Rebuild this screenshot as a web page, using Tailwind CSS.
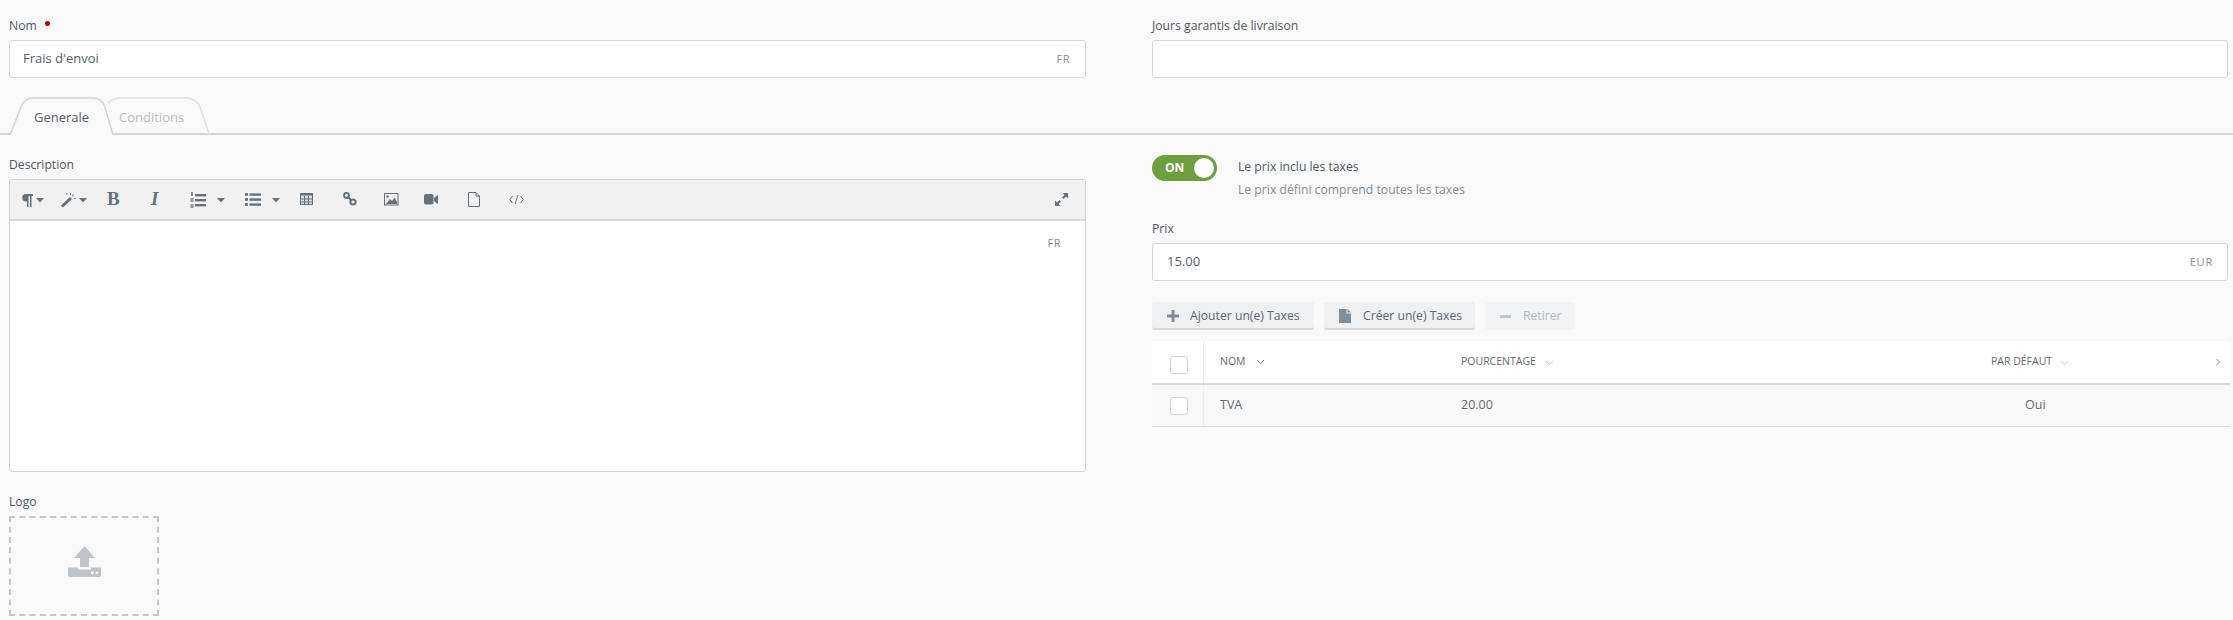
<!DOCTYPE html>
<html lang="fr">
<head>
  <meta charset="UTF-8">
  <title>Frais d'envoi</title>
  <script src="https://cdn.jsdelivr.net/npm/@tailwindcss/browser@4"></script>
</head>
<body class="bg-[#f9f9f9] font-['Open_Sans',sans-serif] text-[12.2px] text-[#55606b] overflow-hidden">
<div class="w-[2233px] h-[620px] overflow-hidden">

  <!-- top fields -->
  <div class="flex pl-[9px] pt-[17px] pr-[5px] gap-[66px]">
    <div class="w-[1077px]">
      <div class="h-[23px] leading-[18px] text-[#4d5862] flex items-start">Nom <span class="w-[5px] h-[5px] rounded-full bg-[#b30000] ml-[8px] mt-[4px]"></span></div>
      <div class="h-[38px] bg-white border border-[#d5d7d8] rounded-[3px] flex items-center justify-between pl-[13px] pr-[15px]">
        <span class="text-[13px]">Frais d'envoi</span><span class="text-[11px] text-[#8a8f93] tracking-[0.5px]">FR</span>
      </div>
    </div>
    <div class="flex-1">
      <div class="h-[23px] leading-[18px] text-[#4d5862]">Jours garantis de livraison</div>
      <div class="h-[38px] bg-white border border-[#d5d7d8] rounded-[3px]"></div>
    </div>
  </div>

  <!-- tabs -->
  <div class="relative h-[38px] mt-[19px] border-b-2 border-[#d2d4d5]">
    <svg class="absolute left-[8px] top-0" width="206" height="38" viewBox="0 0 206 38" fill="none">
      <path d="M100 6 Q105 1 113 1 L178 1 Q188 1 192 10 L201 37" fill="#f9f9f9" stroke="#dfe1e2" stroke-width="1.5"/>
      <path d="M2 38 L13 10 Q16 1 26 1 L84 1 Q94 1 97 10 L105 38" fill="#f9f9f9" stroke="#d2d4d5" stroke-width="1.5"/>
    </svg>
    <span class="absolute left-[34px] top-[10px] text-[13px] leading-[20px] text-[#55606b]">Generale</span>
    <span class="absolute left-[119px] top-[10px] text-[13px] leading-[20px] text-[#bcbfc1]">Conditions</span>
  </div>

  <div class="flex pl-[9px] pr-[3px] gap-[66px]">
    <!-- left column -->
    <div class="w-[1077px]">
      <div class="h-[20px] mt-[21px] mb-[3px] leading-[18px] text-[#4d5862]">Description</div>
      <div class="h-[293px] bg-white border border-[#d0d2d3] rounded-[3px] flex flex-col">
        <div class="h-[41px] bg-[#f1f1f1] border-b-2 border-[#d8d9da] relative text-[#66707a] shrink-0">
          <!-- paragraph -->
          <svg class="absolute left-[12px] top-[14px]" width="11" height="13" viewBox="0 0 11 13" fill="#66707a"><path d="M4 0H11V2H9.5V13H8V2H6.5V13H5V7.5H4A3.75 3.75 0 0 1 4 0Z"/></svg>
          <svg class="absolute left-[26px] top-[18px]" width="8" height="5" fill="#66707a"><path d="M0 0H8L4 4.5Z"/></svg>
          <!-- magic -->
          <svg class="absolute left-[50px] top-[12px]" width="16" height="16" viewBox="0 0 16 16" fill="#66707a"><path d="M1 13.5 10 5l2 2-9 8.5z"/><path d="M10 1h1v2h-1zM13 2l1 1-1.5 1.5-1-1zM14 6h2v1h-2zM6 1l1 0 .5 2-1 0z" opacity=".75"/></svg>
          <svg class="absolute left-[69px] top-[18px]" width="8" height="5" fill="#66707a"><path d="M0 0H8L4 4.5Z"/></svg>
          <!-- bold / italic -->
          <span class="absolute left-[97px] top-[9px] font-['Liberation_Serif',serif] font-bold text-[19px] leading-[20px]">B</span>
          <span class="absolute left-[141px] top-[9px] font-['Liberation_Serif',serif] italic font-bold text-[19px] leading-[20px]">I</span>
          <!-- ol -->
          <svg class="absolute left-[180px] top-[12px]" width="16" height="16" viewBox="0 0 16 16" fill="#66707a"><rect x="5" y="2" width="11" height="2.4"/><rect x="5" y="7" width="11" height="2.4"/><rect x="5" y="12" width="11" height="2.4"/><rect x="1" y="0" width="2" height="4" opacity=".8"/><rect x="0.5" y="6" width="3" height="4" opacity=".7"/><rect x="0.5" y="12" width="3" height="4" opacity=".7"/></svg>
          <svg class="absolute left-[207px] top-[18px]" width="8" height="5" fill="#66707a"><path d="M0 0H8L4 4.5Z"/></svg>
          <!-- ul -->
          <svg class="absolute left-[235px] top-[13px]" width="16" height="13" viewBox="0 0 16 13" fill="#66707a"><rect y="0" width="3" height="3" rx="1"/><rect y="5" width="3" height="3" rx="1"/><rect y="10" width="3" height="3" rx="1"/><rect x="4.5" y=".4" width="11.5" height="2.4"/><rect x="4.5" y="5.4" width="11.5" height="2.4"/><rect x="4.5" y="10.4" width="11.5" height="2.4"/></svg>
          <svg class="absolute left-[262px] top-[18px]" width="8" height="5" fill="#66707a"><path d="M0 0H8L4 4.5Z"/></svg>
          <!-- table -->
          <svg class="absolute left-[290px] top-[13px]" width="13" height="12" viewBox="0 0 13 12" fill="none" stroke="#66707a"><rect x=".5" y=".5" width="12" height="11" fill="#66707a" fill-opacity=".15"/><path d="M0 1.5h13" stroke-width="2"/><path d="M0 6h13M0 9h13M4.5 3v9M8.5 3v9"/></svg>
          <!-- link -->
          <svg class="absolute left-[333px] top-[12px]" width="14" height="14" viewBox="0 0 14 14" fill="none" stroke="#66707a" stroke-width="2"><circle cx="3.5" cy="3.5" r="2.4"/><circle cx="10" cy="10" r="2.6"/><path d="M5.5 5.5l2.5 2.5"/></svg>
          <!-- image -->
          <svg class="absolute left-[374px] top-[13px]" width="15" height="13" viewBox="0 0 15 13" fill="none" stroke="#66707a"><rect x=".5" y=".5" width="13.5" height="11.5"/><circle cx="3.5" cy="3.5" r="1.2" fill="#66707a" stroke="none"/><path d="M2 11 6 6l2 2 2.5-3.5L13 9v2z" fill="#66707a" stroke="none"/></svg>
          <!-- video -->
          <svg class="absolute left-[414px] top-[14px]" width="14" height="11" viewBox="0 0 14 11" fill="#66707a"><rect width="9.5" height="10.5" rx="2"/><path d="M10 4 14 .8v9.4L10 7z"/></svg>
          <!-- file -->
          <svg class="absolute left-[458px] top-[12px]" width="12" height="15" viewBox="0 0 12 15" fill="none" stroke="#66707a"><path d="M.5.5H8L11.5 4v10.5H.5zM8 .5V4h3.5"/></svg>
          <!-- code -->
          <svg class="absolute left-[499px] top-[14px]" width="15" height="11" viewBox="0 0 15 11" fill="none" stroke="#66707a"><path d="M3.5 2 .8 5.5 3.5 9M11.5 2l2.7 3.5L11.5 9M8.8 1 6.2 10"/></svg>
          <!-- fullscreen -->
          <svg class="absolute right-[17px] top-[13px]" width="13" height="13" viewBox="0 0 13 13" fill="#66707a"><path d="M7.5 0H13V5.5L11 3.5 8.5 6 7 4.5 9.5 2zM5.5 13H0V7.5L2 9.5 4.5 7 6 8.5 3.5 11z"/></svg>
        </div>
        <div class="flex justify-end pr-[24px] pt-[14px] text-[11px] leading-[15px] text-[#8a8f93] tracking-[0.5px]">FR</div>
      </div>
      <div class="h-[20px] mt-[20px] mb-[4px] leading-[20px] text-[#4d5862]">Logo</div>
      <div class="w-[150px] h-[100px] border-2 border-dashed border-[#c4c6c7] flex items-center justify-center pb-[10px]">
        <svg width="33" height="31" viewBox="0 0 33 31" fill="#bfc4c9"><path d="M16.5 0 27 12H21V21H12V12H6Z"/><path d="M0 21.5H10V23.5H23V21.5H33V29Q33 31 31 31H2Q0 31 0 29Z"/><g fill="#f9f9f9"><rect x="23" y="25.5" width="2.5" height="2.5"/><rect x="27.5" y="25.5" width="2.5" height="2.5"/></g></svg>
      </div>
    </div>

    <!-- right column -->
    <div class="flex-1">
      <div class="flex mt-[20px]">
        <div class="w-[65px] h-[26px] rounded-full bg-[#6f9e3c] relative text-white font-bold text-[12px] leading-[26px] pl-[13px]">ON
          <span class="absolute right-[3px] top-[3px] w-[20px] h-[20px] rounded-full bg-white"></span>
        </div>
        <div class="ml-[21px] leading-[18px]">
          <div class="mt-[3px] text-[#4d5862]">Le prix inclu les taxes</div>
          <div class="mt-[5px] text-[#858d94]">Le prix défini comprend toutes les taxes</div>
        </div>
      </div>
      <div class="h-[18px] mt-[21px] mb-[5px] leading-[18px] text-[#4d5862]">Prix</div>
      <div class="w-[1076px] h-[38px] bg-white border border-[#d5d7d8] rounded-[3px] flex items-center justify-between pl-[14px] pr-[14px]">
        <span class="text-[13px]">15.00</span><span class="text-[11px] text-[#8a8f93] tracking-[0.8px]">EUR</span>
      </div>

      <div class="flex gap-[10px] mt-[21px]">
        <div class="h-[28px] w-[162px] bg-[#eef0f1] border-b-2 border-[#d5d7d9] rounded-[3px] flex items-center pl-[15px] pt-[2px] text-[#5c666f]">
          <svg width="12" height="12" viewBox="0 0 12 12" fill="#838d96"><path d="M4.5 0h3v4.5H12v3H7.5V12h-3V7.5H0v-3h4.5z"/></svg>
          <span class="ml-[11px]">Ajouter un(e) Taxes</span>
        </div>
        <div class="h-[28px] w-[151px] bg-[#eef0f1] border-b-2 border-[#d5d7d9] rounded-[3px] flex items-center pl-[15px] pt-[2px] text-[#5c666f]">
          <svg width="12" height="14" viewBox="0 0 12 14" fill="#838d96"><path d="M0 0H7.5V4.5H12V14H0zM8.5 0 12 3.5H8.5z"/></svg>
          <span class="ml-[12px]">Créer un(e) Taxes</span>
        </div>
        <div class="h-[28px] w-[90px] bg-[#f2f3f4] rounded-[3px] flex items-center pl-[15px] pt-[1px] text-[#b5b9bc]">
          <span class="w-[11px] h-[3px] bg-[#c5c8cb]"></span>
          <span class="ml-[12px]">Retirer</span>
        </div>
      </div>

      <!-- taxes table -->
      <div class="w-[1078px] mt-[11px] text-[#5f6971]">
        <div class="h-[44px] bg-white border-b-[2px] border-[#d8d9da] flex items-center text-[10.5px] relative">
          <div class="w-[52px] h-full border-r border-[#eeeeee] flex items-center justify-center pl-[3px] pt-[5px]">
            <span class="w-[18px] h-[18px] bg-white border border-[#cfd1d3] rounded-[3px]"></span>
          </div>
          <span class="ml-[16px]">NOM</span>
          <svg class="ml-[10px]" width="9" height="6" viewBox="0 0 9 6" fill="none" stroke="#a0665f"><path d="M1 1l3.5 3.5L8 1"/></svg>
          <span class="absolute left-[309px]">POURCENTAGE</span>
          <svg class="absolute left-[393px] top-[19px]" width="9" height="6" viewBox="0 0 9 6" fill="none" stroke="#c5c9cc"><path d="M1 1l3.5 3.5L8 1"/></svg>
          <span class="absolute left-[839px]">PAR DÉFAUT</span>
          <svg class="absolute left-[908px] top-[19px]" width="9" height="6" viewBox="0 0 9 6" fill="none" stroke="#c5c9cc"><path d="M1 1l3.5 3.5L8 1"/></svg>
          <svg class="absolute left-[1063px] top-[17px]" width="6" height="8" viewBox="0 0 6 8" fill="none" stroke="#8d959b"><path d="M1.5 1l3 3-3 3"/></svg>
        </div>
        <div class="h-[42px] bg-[#f8f8f8] border-b border-[#d8d9da] flex items-center relative pr-[3px] text-[12.5px]">
          <div class="w-[52px] h-full border-r border-[#eeeeee] flex items-center justify-center pl-[3px]">
            <span class="w-[18px] h-[18px] bg-white border border-[#cfd1d3] rounded-[3px]"></span>
          </div>
          <span class="ml-[16px]">TVA</span>
          <span class="absolute left-[309px]">20.00</span>
          <span class="absolute left-[873px]">Oui</span>
        </div>
      </div>
    </div>
  </div>

</div>
</body>
</html>
